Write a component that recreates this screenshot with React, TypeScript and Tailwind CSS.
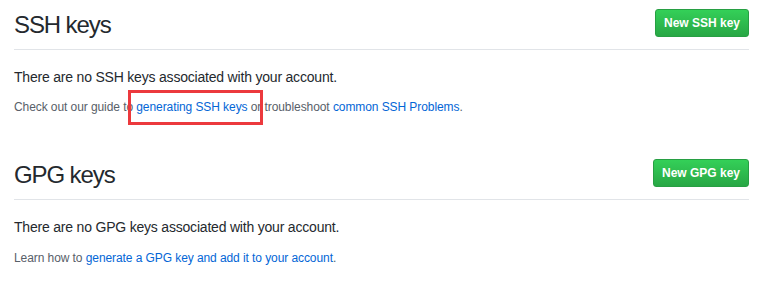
import React from "react"

type Section = {
  title: string
  button: string
  buttonWidth: string
  empty: string
}

function NewButton({ label, width }: { label: string; width: string }) {
  return (
    <button
      type="button"
      className={`${width} mt-[2px] h-[28px] rounded-[3px] border border-[#279f43] bg-gradient-to-b from-[#34d058] to-[#28a745] text-[12px] font-bold leading-[20px] text-white`}
    >
      {label}
    </button>
  )
}

function Subhead({ section }: { section: Section }) {
  return (
    <div className="flex items-start justify-between border-b border-[#e1e4e8] pb-[6px]">
      <h2 className="text-[24px] font-normal leading-[36px] tracking-[-1.1px] text-[#24292e]">
        {section.title}
      </h2>
      <NewButton label={section.button} width={section.buttonWidth} />
    </div>
  )
}

export default function App() {
  const ssh: Section = {
    title: "SSH keys",
    button: "New SSH key",
    buttonWidth: "w-[94px]",
    empty: "There are no SSH keys associated with your account.",
  }
  const gpg: Section = {
    title: "GPG keys",
    button: "New GPG key",
    buttonWidth: "w-[96px]",
    empty: "There are no GPG keys associated with your account.",
  }

  return (
    <div className="min-h-[289px] bg-white pl-[14px] pr-[17px] pt-[7px] font-['Liberation_Sans',Arial,sans-serif]">
      {/* SSH */}
      <div>
        <Subhead section={ssh} />
        <p className="mt-[17px] text-[14px] leading-[21px] tracking-[-0.2px] text-[#24292e]">{ssh.empty}</p>
        <p className="mt-[10px] text-[12px] leading-[18px] tracking-[-0.08px] text-[#586069]">
          Check out our guide to{" "}
          <span className="relative">
            <a href="#" className="text-[#0366d6]">
              generating SSH keys
            </a>
            <span className="pointer-events-none absolute -bottom-[11px] -left-[8px] -right-[16px] -top-[10px] border-[3px] border-[#ec393d]" />
          </span>{" "}
          or troubleshoot{" "}
          <a href="#" className="text-[#0366d6]">
            common SSH Problems
          </a>
          .
        </p>
      </div>

      {/* GPG */}
      <div className="mt-[41px]">
        <Subhead section={gpg} />
        <p className="mt-[17px] text-[14px] leading-[21px] tracking-[-0.2px] text-[#24292e]">{gpg.empty}</p>
        <p className="mt-[11px] text-[12px] leading-[18px] tracking-[-0.08px] text-[#586069]">
          Learn how to{" "}
          <a href="#" className="text-[#0366d6]">
            generate a GPG key and add it to your account
          </a>
          .
        </p>
      </div>
    </div>
  )
}
